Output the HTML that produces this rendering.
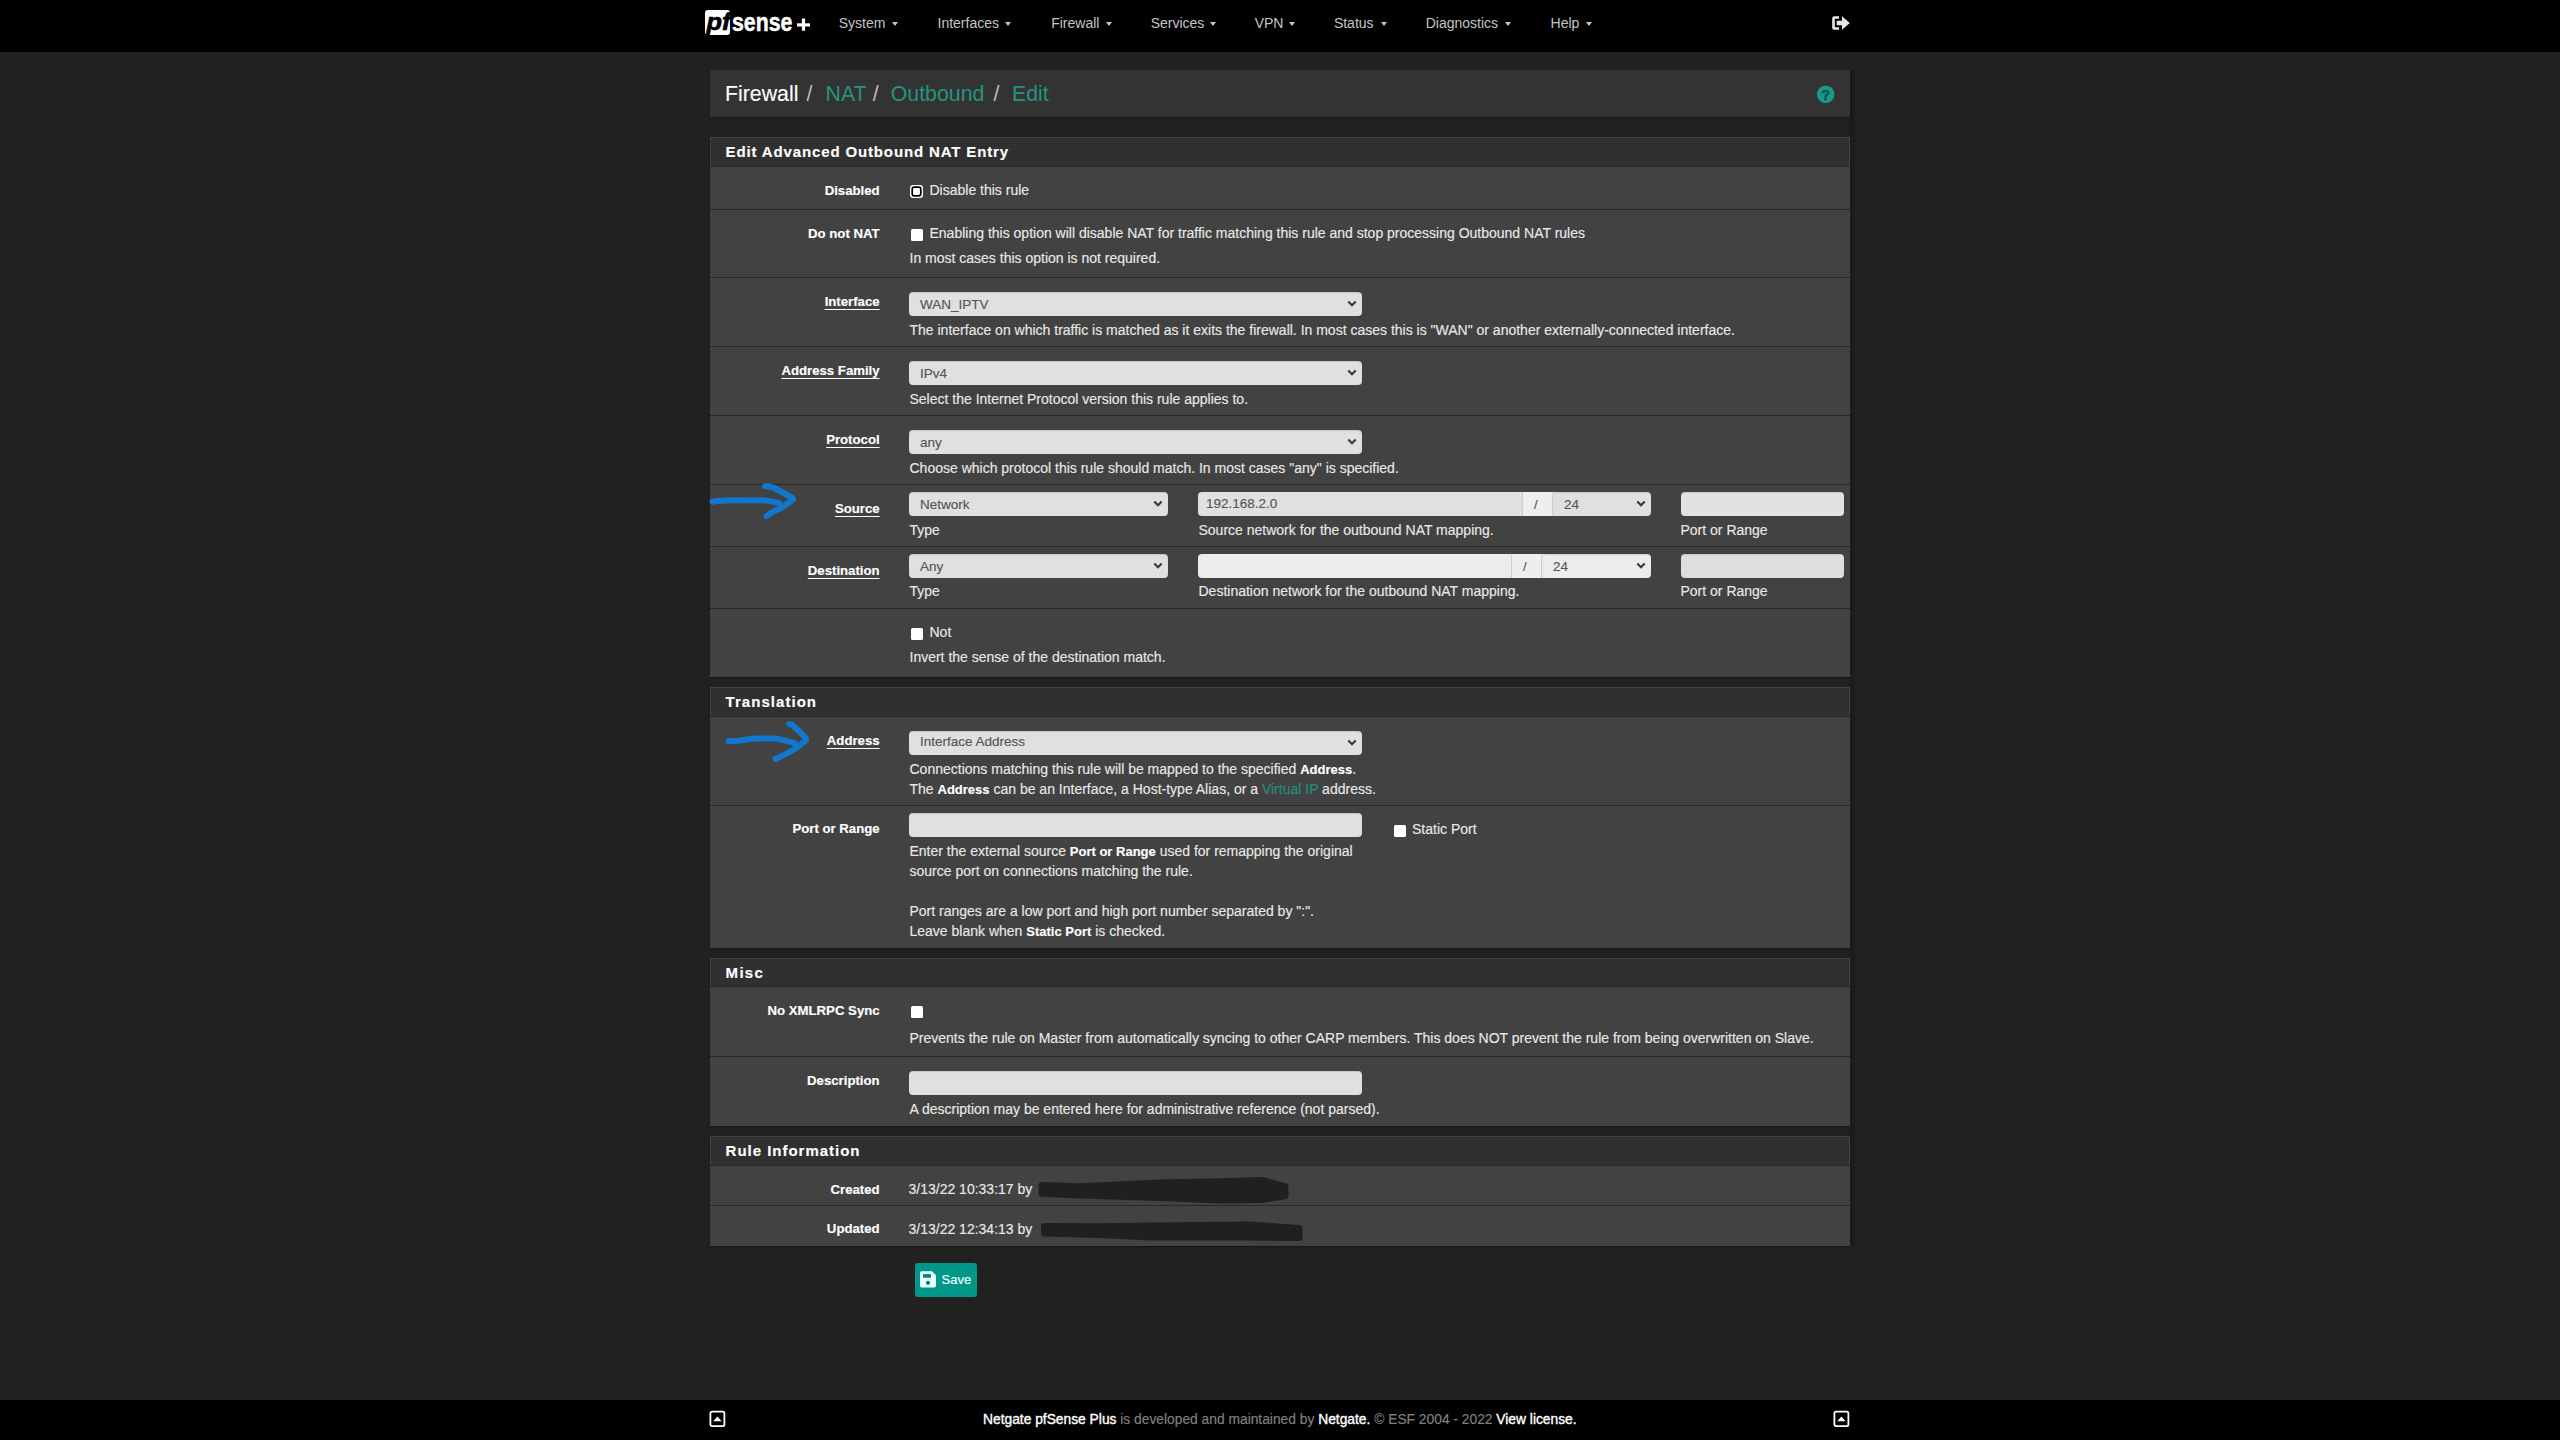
<!DOCTYPE html>
<html><head><meta charset="utf-8"><title>Firewall: NAT: Outbound: Edit</title>
<style>
html,body{margin:0;padding:0;}
body{width:2560px;height:1440px;position:relative;overflow:hidden;background:#212121;font-family:"Liberation Sans",sans-serif;}
.t{position:absolute;white-space:nowrap;-webkit-text-stroke:0.15px currentColor;}
.t b{font-weight:700;color:#fff;font-size:13px;}
.r{position:absolute;}
</style></head><body>
<div class="r" style="left:0px;top:0px;width:2560px;height:52px;background:#000;"></div>
<div class="r" style="left:0px;top:1400px;width:2560px;height:40px;background:#000;"></div>
<svg class="r" style="left:704px;top:9px" width="110" height="28" viewBox="0 0 110 28"><rect x="1" y="1" width="25" height="25" rx="3" fill="#fff"/><text x="2.5" y="21.3" font-family="Liberation Sans" font-weight="bold" font-style="italic" font-size="24.5" fill="#000" stroke="#000" stroke-width="0.7" textLength="24" lengthAdjust="spacingAndGlyphs">pf</text><text x="28" y="22" font-family="Liberation Sans" font-weight="bold" font-size="25" fill="#fff" stroke="#fff" stroke-width="0.5" textLength="60.4" lengthAdjust="spacingAndGlyphs">sense</text><rect x="93" y="14.3" width="13" height="3.2" fill="#fff"/><rect x="97.9" y="9.5" width="3.2" height="12.2" fill="#fff"/></svg>
<div class="t" style="left:838.7px;top:16.45px;font-size:14px;line-height:14px;font-weight:400;color:#c4c4c4;-webkit-text-stroke:0;">System</div>
<div class="r" style="left:891.7px;top:22px;width:0;height:0;border-left:3.8px solid transparent;border-right:3.8px solid transparent;border-top:4.4px solid #c4c4c4"></div>
<div class="t" style="left:937.5px;top:16.45px;font-size:14px;line-height:14px;font-weight:400;color:#c4c4c4;-webkit-text-stroke:0;">Interfaces</div>
<div class="r" style="left:1005.0px;top:22px;width:0;height:0;border-left:3.8px solid transparent;border-right:3.8px solid transparent;border-top:4.4px solid #c4c4c4"></div>
<div class="t" style="left:1051.2px;top:16.45px;font-size:14px;line-height:14px;font-weight:400;color:#c4c4c4;-webkit-text-stroke:0;">Firewall</div>
<div class="r" style="left:1105.6px;top:22px;width:0;height:0;border-left:3.8px solid transparent;border-right:3.8px solid transparent;border-top:4.4px solid #c4c4c4"></div>
<div class="t" style="left:1150.7px;top:16.45px;font-size:14px;line-height:14px;font-weight:400;color:#c4c4c4;-webkit-text-stroke:0;">Services</div>
<div class="r" style="left:1209.5px;top:22px;width:0;height:0;border-left:3.8px solid transparent;border-right:3.8px solid transparent;border-top:4.4px solid #c4c4c4"></div>
<div class="t" style="left:1254.7px;top:16.45px;font-size:14px;line-height:14px;font-weight:400;color:#c4c4c4;-webkit-text-stroke:0;">VPN</div>
<div class="r" style="left:1289.0px;top:22px;width:0;height:0;border-left:3.8px solid transparent;border-right:3.8px solid transparent;border-top:4.4px solid #c4c4c4"></div>
<div class="t" style="left:1333.9px;top:16.45px;font-size:14px;line-height:14px;font-weight:400;color:#c4c4c4;-webkit-text-stroke:0;">Status</div>
<div class="r" style="left:1380.7px;top:22px;width:0;height:0;border-left:3.8px solid transparent;border-right:3.8px solid transparent;border-top:4.4px solid #c4c4c4"></div>
<div class="t" style="left:1425.7px;top:16.45px;font-size:14px;line-height:14px;font-weight:400;color:#c4c4c4;-webkit-text-stroke:0;">Diagnostics</div>
<div class="r" style="left:1505.0px;top:22px;width:0;height:0;border-left:3.8px solid transparent;border-right:3.8px solid transparent;border-top:4.4px solid #c4c4c4"></div>
<div class="t" style="left:1550.6000000000001px;top:16.45px;font-size:14px;line-height:14px;font-weight:400;color:#c4c4c4;-webkit-text-stroke:0;">Help</div>
<div class="r" style="left:1585.7px;top:22px;width:0;height:0;border-left:3.8px solid transparent;border-right:3.8px solid transparent;border-top:4.4px solid #c4c4c4"></div>
<svg class="r" style="left:1831px;top:15px" width="20" height="16" viewBox="0 0 20 16"><path d="M8 1.2 H3.2 Q1.2 1.2 1.2 3.2 V12.8 Q1.2 14.8 3.2 14.8 H8 V12.3 H3.8 V3.7 H8 Z" fill="#e8e8e8"/><path d="M5.7 5.7 H11 V1.2 L18.8 8 L11 14.8 V10.3 H5.7 Z" fill="#e8e8e8"/></svg>
<div class="r" style="left:1850px;top:70px;width:5px;height:1176px;background:#1c1c1c;"></div>
<div class="r" style="left:710px;top:70px;width:1140px;height:47px;background:#333333;box-shadow:1px 1px 2px rgba(0,0,0,.35)"></div>
<div class="t" style="left:725px;top:83.97px;font-size:21.3px;line-height:21.3px;font-weight:400;color:#ffffff;-webkit-text-stroke:0.1px #fff;">Firewall</div>
<div class="t" style="left:806.5px;top:83.97px;font-size:21.3px;line-height:21.3px;font-weight:400;color:#bdbdbd;-webkit-text-stroke:0;">/</div>
<div class="t" style="left:825.5px;top:83.97px;font-size:21.3px;line-height:21.3px;font-weight:400;color:#27937f;-webkit-text-stroke:0;">NAT</div>
<div class="t" style="left:872.8px;top:83.97px;font-size:21.3px;line-height:21.3px;font-weight:400;color:#bdbdbd;-webkit-text-stroke:0;">/</div>
<div class="t" style="left:890.8px;top:83.97px;font-size:21.3px;line-height:21.3px;font-weight:400;color:#27937f;-webkit-text-stroke:0;">Outbound</div>
<div class="t" style="left:993.5px;top:83.97px;font-size:21.3px;line-height:21.3px;font-weight:400;color:#bdbdbd;-webkit-text-stroke:0;">/</div>
<div class="t" style="left:1012px;top:83.97px;font-size:21.3px;line-height:21.3px;font-weight:400;color:#27937f;-webkit-text-stroke:0;">Edit</div>
<svg class="r" style="left:1816px;top:85px" width="20" height="19" viewBox="0 0 20 19"><circle cx="9.7" cy="9.2" r="8.8" fill="#179a8a"/><text x="9.8" y="14.6" text-anchor="middle" font-family="Liberation Sans" font-weight="bold" font-size="14.5" fill="#07574d" stroke="#07574d" stroke-width="0.5">?</text></svg>
<div class="r" style="left:710px;top:137px;width:1140px;height:540px;background:#424242;box-shadow:0 1px 1px rgba(0,0,0,.35)"></div>
<div class="r" style="left:711px;top:138px;width:1138px;height:28px;background:#303030;"></div>
<div class="r" style="left:710px;top:166px;width:1140px;height:1px;background:#262626;"></div>
<div class="t" style="left:725.6px;top:143.50px;font-size:15px;line-height:15px;font-weight:700;color:#ffffff;letter-spacing:0.86px;">Edit Advanced Outbound NAT Entry</div>
<div class="r" style="left:710px;top:209px;width:1140px;height:1px;background:#282828;"></div>
<div class="r" style="left:710px;top:277px;width:1140px;height:1px;background:#282828;"></div>
<div class="r" style="left:710px;top:346px;width:1140px;height:1px;background:#282828;"></div>
<div class="r" style="left:710px;top:415px;width:1140px;height:1px;background:#282828;"></div>
<div class="r" style="left:710px;top:484px;width:1140px;height:1px;background:#282828;"></div>
<div class="r" style="left:710px;top:546px;width:1140px;height:1px;background:#282828;"></div>
<div class="r" style="left:710px;top:608px;width:1140px;height:1px;background:#282828;"></div>
<div class="t" style="right:1680.4px;text-align:right;top:183.58px;font-size:13.2px;line-height:13.2px;font-weight:700;color:#ffffff;">Disabled</div>
<svg class="r" style="left:909px;top:184px" width="16" height="16" viewBox="0 0 16 16"><rect x="1" y="1" width="13" height="13" rx="3" fill="#fff"/><rect x="3.2" y="3.2" width="8.6" height="8.6" rx="2" fill="#fff" stroke="#000" stroke-width="1.7"/></svg>
<div class="t" style="left:929.5px;top:182.90px;font-size:14px;line-height:14px;font-weight:400;color:#e8e8e8;">Disable this rule</div>
<div class="t" style="right:1680.4px;text-align:right;top:226.83px;font-size:13.2px;line-height:13.2px;font-weight:700;color:#ffffff;">Do not NAT</div>
<div class="r" style="left:910.5px;top:228.5px;width:12px;height:12px;background:#fff;border-radius:1.5px"></div>
<div class="t" style="left:929.5px;top:226.15px;font-size:14px;line-height:14px;font-weight:400;color:#e8e8e8;">Enabling this option will disable NAT for traffic matching this rule and stop processing Outbound NAT rules</div>
<div class="t" style="left:909.5px;top:250.90px;font-size:14px;line-height:14px;font-weight:400;color:#e8e8e8;">In most cases this option is not required.</div>
<div class="t" style="right:1680.4px;text-align:right;top:294.73px;font-size:13.2px;line-height:13.2px;font-weight:700;color:#ffffff;text-decoration:underline;text-underline-offset:3px;text-decoration-thickness:1.2px;">Interface</div>
<div class="r" style="left:909px;top:292px;width:453px;height:24px;background:#e0e0e0;border-radius:4px;box-shadow:inset 0 1px 1px rgba(0,0,0,.12)"></div>
<div class="t" style="left:920px;top:297.57px;font-size:13.5px;line-height:13.5px;font-weight:400;color:#555;">WAN_IPTV</div>
<svg class="r" style="left:1346.5px;top:300.3px" width="10" height="8" viewBox="0 0 10 8"><path d="M1.3 1.5 L5 5.2 L8.7 1.5" stroke="#3a3a3a" stroke-width="2.2" fill="none"/></svg>
<div class="t" style="left:909.5px;top:322.95px;font-size:14px;line-height:14px;font-weight:400;color:#e8e8e8;">The interface on which traffic is matched as it exits the firewall. In most cases this is &quot;WAN&quot; or another externally-connected interface.</div>
<div class="t" style="right:1680.4px;text-align:right;top:363.73px;font-size:13.2px;line-height:13.2px;font-weight:700;color:#ffffff;text-decoration:underline;text-underline-offset:3px;text-decoration-thickness:1.2px;">Address Family</div>
<div class="r" style="left:909px;top:361px;width:453px;height:24px;background:#e0e0e0;border-radius:4px;box-shadow:inset 0 1px 1px rgba(0,0,0,.12)"></div>
<div class="t" style="left:920px;top:366.57px;font-size:13.5px;line-height:13.5px;font-weight:400;color:#555;">IPv4</div>
<svg class="r" style="left:1346.5px;top:369.3px" width="10" height="8" viewBox="0 0 10 8"><path d="M1.3 1.5 L5 5.2 L8.7 1.5" stroke="#3a3a3a" stroke-width="2.2" fill="none"/></svg>
<div class="t" style="left:909.5px;top:391.95px;font-size:14px;line-height:14px;font-weight:400;color:#e8e8e8;">Select the Internet Protocol version this rule applies to.</div>
<div class="t" style="right:1680.4px;text-align:right;top:432.73px;font-size:13.2px;line-height:13.2px;font-weight:700;color:#ffffff;text-decoration:underline;text-underline-offset:3px;text-decoration-thickness:1.2px;">Protocol</div>
<div class="r" style="left:909px;top:430px;width:453px;height:24px;background:#e0e0e0;border-radius:4px;box-shadow:inset 0 1px 1px rgba(0,0,0,.12)"></div>
<div class="t" style="left:920px;top:435.57px;font-size:13.5px;line-height:13.5px;font-weight:400;color:#555;">any</div>
<svg class="r" style="left:1346.5px;top:438.3px" width="10" height="8" viewBox="0 0 10 8"><path d="M1.3 1.5 L5 5.2 L8.7 1.5" stroke="#3a3a3a" stroke-width="2.2" fill="none"/></svg>
<div class="t" style="left:909.5px;top:460.95px;font-size:14px;line-height:14px;font-weight:400;color:#e8e8e8;">Choose which protocol this rule should match. In most cases &quot;any&quot; is specified.</div>
<div class="t" style="right:1680.4px;text-align:right;top:501.73px;font-size:13.2px;line-height:13.2px;font-weight:700;color:#ffffff;text-decoration:underline;text-underline-offset:3px;text-decoration-thickness:1.2px;">Source</div>
<div class="r" style="left:909px;top:492px;width:259px;height:24px;background:#e0e0e0;border-radius:4px;box-shadow:inset 0 1px 1px rgba(0,0,0,.12)"></div>
<div class="t" style="left:920px;top:497.57px;font-size:13.5px;line-height:13.5px;font-weight:400;color:#555;">Network</div>
<svg class="r" style="left:1152.5px;top:500.3px" width="10" height="8" viewBox="0 0 10 8"><path d="M1.3 1.5 L5 5.2 L8.7 1.5" stroke="#3a3a3a" stroke-width="2.2" fill="none"/></svg>
<div class="t" style="left:909.5px;top:523.15px;font-size:14px;line-height:14px;font-weight:400;color:#e8e8e8;">Type</div>
<div class="r" style="left:1198px;top:492px;width:453px;height:24px;background:#e0e0e0;border-radius:4px;overflow:hidden"><div class="r" style="left:324px;top:0;width:31px;height:24px;background:#eeeeee;border-left:1px solid #cfcfcf;border-right:1px solid #cfcfcf;box-sizing:border-box"></div></div>
<div class="t" style="left:1206px;top:497.37px;font-size:13.5px;line-height:13.5px;font-weight:400;color:#555;">192.168.2.0</div>
<div class="t" style="left:1534px;top:497.80px;font-size:13px;line-height:13px;font-weight:400;color:#555;">/</div>
<div class="r" style="left:1554px;top:492px;width:97px;height:24px;background:transparent;border-radius:4px;box-shadow:inset 0 1px 1px rgba(0,0,0,.12)"></div>
<div class="t" style="left:1564px;top:497.57px;font-size:13.5px;line-height:13.5px;font-weight:400;color:#555;">24</div>
<svg class="r" style="left:1635.5px;top:500.3px" width="10" height="8" viewBox="0 0 10 8"><path d="M1.3 1.5 L5 5.2 L8.7 1.5" stroke="#3a3a3a" stroke-width="2.2" fill="none"/></svg>
<div class="t" style="left:1198.5px;top:523.15px;font-size:14px;line-height:14px;font-weight:400;color:#e8e8e8;">Source network for the outbound NAT mapping.</div>
<div class="r" style="left:1681px;top:492px;width:163px;height:24px;background:#e2e2e2;border-radius:4px;box-shadow:inset 0 1px 1px rgba(0,0,0,.12)"></div>
<div class="t" style="left:1680.5px;top:523.15px;font-size:14px;line-height:14px;font-weight:400;color:#e8e8e8;">Port or Range</div>
<div class="t" style="right:1680.4px;text-align:right;top:563.53px;font-size:13.2px;line-height:13.2px;font-weight:700;color:#ffffff;text-decoration:underline;text-underline-offset:3px;text-decoration-thickness:1.2px;">Destination</div>
<div class="r" style="left:909px;top:554px;width:259px;height:24px;background:#e0e0e0;border-radius:4px;box-shadow:inset 0 1px 1px rgba(0,0,0,.12)"></div>
<div class="t" style="left:920px;top:559.57px;font-size:13.5px;line-height:13.5px;font-weight:400;color:#555;">Any</div>
<svg class="r" style="left:1152.5px;top:562.3px" width="10" height="8" viewBox="0 0 10 8"><path d="M1.3 1.5 L5 5.2 L8.7 1.5" stroke="#3a3a3a" stroke-width="2.2" fill="none"/></svg>
<div class="t" style="left:909.5px;top:584.40px;font-size:14px;line-height:14px;font-weight:400;color:#e8e8e8;">Type</div>
<div class="r" style="left:1198px;top:554px;width:453px;height:24px;background:#ececec;border-radius:4px;overflow:hidden"><div class="r" style="left:313px;top:0;width:31px;height:24px;background:#eeeeee;border-left:1px solid #cfcfcf;border-right:1px solid #cfcfcf;box-sizing:border-box"></div></div>
<div class="t" style="left:1523px;top:559.80px;font-size:13px;line-height:13px;font-weight:400;color:#555;">/</div>
<div class="r" style="left:1542px;top:554px;width:109px;height:24px;background:transparent;border-radius:4px;box-shadow:inset 0 1px 1px rgba(0,0,0,.12)"></div>
<div class="t" style="left:1553px;top:559.57px;font-size:13.5px;line-height:13.5px;font-weight:400;color:#555;">24</div>
<svg class="r" style="left:1635.5px;top:562.3px" width="10" height="8" viewBox="0 0 10 8"><path d="M1.3 1.5 L5 5.2 L8.7 1.5" stroke="#3a3a3a" stroke-width="2.2" fill="none"/></svg>
<div class="t" style="left:1198.5px;top:584.40px;font-size:14px;line-height:14px;font-weight:400;color:#e8e8e8;">Destination network for the outbound NAT mapping.</div>
<div class="r" style="left:1681px;top:554px;width:163px;height:24px;background:#dedede;border-radius:4px;box-shadow:inset 0 1px 1px rgba(0,0,0,.12)"></div>
<div class="t" style="left:1680.5px;top:584.40px;font-size:14px;line-height:14px;font-weight:400;color:#e8e8e8;">Port or Range</div>
<div class="r" style="left:910.5px;top:627.5px;width:12px;height:12px;background:#fff;border-radius:1.5px"></div>
<div class="t" style="left:929.5px;top:625.15px;font-size:14px;line-height:14px;font-weight:400;color:#e8e8e8;">Not</div>
<div class="t" style="left:909.5px;top:650.15px;font-size:14px;line-height:14px;font-weight:400;color:#e8e8e8;">Invert the sense of the destination match.</div>
<div class="r" style="left:710px;top:687px;width:1140px;height:261px;background:#424242;box-shadow:0 1px 1px rgba(0,0,0,.35)"></div>
<div class="r" style="left:711px;top:688px;width:1138px;height:28px;background:#303030;"></div>
<div class="r" style="left:710px;top:716px;width:1140px;height:1px;background:#262626;"></div>
<div class="t" style="left:725.6px;top:693.50px;font-size:15px;line-height:15px;font-weight:700;color:#ffffff;letter-spacing:1.04px;">Translation</div>
<div class="r" style="left:710px;top:805px;width:1140px;height:1px;background:#282828;"></div>
<div class="t" style="right:1680.4px;text-align:right;top:733.83px;font-size:13.2px;line-height:13.2px;font-weight:700;color:#ffffff;text-decoration:underline;text-underline-offset:3px;text-decoration-thickness:1.2px;">Address</div>
<div class="r" style="left:909px;top:731px;width:453px;height:24px;background:#e0e0e0;border-radius:4px;box-shadow:inset 0 1px 1px rgba(0,0,0,.12)"></div>
<div class="t" style="left:920px;top:735.27px;font-size:13.5px;line-height:13.5px;font-weight:400;color:#555;">Interface Address</div>
<svg class="r" style="left:1346.5px;top:739.3px" width="10" height="8" viewBox="0 0 10 8"><path d="M1.3 1.5 L5 5.2 L8.7 1.5" stroke="#3a3a3a" stroke-width="2.2" fill="none"/></svg>
<div class="t" style="left:909.5px;top:762.05px;font-size:14px;line-height:14px;font-weight:400;color:#e8e8e8;">Connections matching this rule will be mapped to the specified <b>Address</b>.</div>
<div class="t" style="left:909.5px;top:781.85px;font-size:14px;line-height:14px;font-weight:400;color:#e8e8e8;">The <b>Address</b> can be an Interface, a Host-type Alias, or a <span style="color:#24907f">Virtual IP</span> address.</div>
<div class="t" style="right:1680.4px;text-align:right;top:822.13px;font-size:13.2px;line-height:13.2px;font-weight:700;color:#ffffff;">Port or Range</div>
<div class="r" style="left:909px;top:813px;width:453px;height:24px;background:#e0e0e0;border-radius:4px;box-shadow:inset 0 1px 1px rgba(0,0,0,.12)"></div>
<div class="r" style="left:1393.5px;top:824.5px;width:12px;height:12px;background:#fff;border-radius:1.5px"></div>
<div class="t" style="left:1412px;top:822.15px;font-size:14px;line-height:14px;font-weight:400;color:#e8e8e8;">Static Port</div>
<div class="t" style="left:909.5px;top:844.25px;font-size:14px;line-height:14px;font-weight:400;color:#e8e8e8;">Enter the external source <b>Port or Range</b> used for remapping the original</div>
<div class="t" style="left:909.5px;top:863.75px;font-size:14px;line-height:14px;font-weight:400;color:#e8e8e8;">source port on connections matching the rule.</div>
<div class="t" style="left:909.5px;top:903.75px;font-size:14px;line-height:14px;font-weight:400;color:#e8e8e8;">Port ranges are a low port and high port number separated by &quot;:&quot;.</div>
<div class="t" style="left:909.5px;top:923.75px;font-size:14px;line-height:14px;font-weight:400;color:#e8e8e8;">Leave blank when <b>Static Port</b> is checked.</div>
<div class="r" style="left:710px;top:958px;width:1140px;height:168px;background:#424242;box-shadow:0 1px 1px rgba(0,0,0,.35)"></div>
<div class="r" style="left:711px;top:959px;width:1138px;height:27px;background:#303030;"></div>
<div class="r" style="left:710px;top:986px;width:1140px;height:1px;background:#262626;"></div>
<div class="t" style="left:725.6px;top:964.50px;font-size:15px;line-height:15px;font-weight:700;color:#ffffff;letter-spacing:1.3px;">Misc</div>
<div class="r" style="left:710px;top:1056px;width:1140px;height:1px;background:#282828;"></div>
<div class="t" style="right:1680.4px;text-align:right;top:1003.83px;font-size:13.2px;line-height:13.2px;font-weight:700;color:#ffffff;">No XMLRPC Sync</div>
<div class="r" style="left:910.5px;top:1005.5px;width:12px;height:12px;background:#fff;border-radius:1.5px"></div>
<div class="t" style="left:909.5px;top:1030.65px;font-size:14px;line-height:14px;font-weight:400;color:#e8e8e8;">Prevents the rule on Master from automatically syncing to other CARP members. This does NOT prevent the rule from being overwritten on Slave.</div>
<div class="t" style="right:1680.4px;text-align:right;top:1073.83px;font-size:13.2px;line-height:13.2px;font-weight:700;color:#ffffff;">Description</div>
<div class="r" style="left:909px;top:1071px;width:453px;height:24px;background:#e0e0e0;border-radius:4px;box-shadow:inset 0 1px 1px rgba(0,0,0,.12)"></div>
<div class="t" style="left:909.5px;top:1101.90px;font-size:14px;line-height:14px;font-weight:400;color:#e8e8e8;">A description may be entered here for administrative reference (not parsed).</div>
<div class="r" style="left:710px;top:1136px;width:1140px;height:110px;background:#424242;box-shadow:0 1px 1px rgba(0,0,0,.35)"></div>
<div class="r" style="left:711px;top:1137px;width:1138px;height:28px;background:#303030;"></div>
<div class="r" style="left:710px;top:1165px;width:1140px;height:1px;background:#262626;"></div>
<div class="t" style="left:725.6px;top:1142.50px;font-size:15px;line-height:15px;font-weight:700;color:#ffffff;letter-spacing:0.98px;">Rule Information</div>
<div class="r" style="left:710px;top:1205px;width:1140px;height:1px;background:#282828;"></div>
<div class="t" style="right:1680.4px;text-align:right;top:1182.73px;font-size:13.2px;line-height:13.2px;font-weight:700;color:#ffffff;">Created</div>
<div class="t" style="left:908.5px;top:1182.05px;font-size:14px;line-height:14px;font-weight:400;color:#e8e8e8;">3/13/22 10:33:17 by</div>
<div class="t" style="right:1680.4px;text-align:right;top:1222.33px;font-size:13.2px;line-height:13.2px;font-weight:700;color:#ffffff;">Updated</div>
<div class="t" style="left:908.5px;top:1221.65px;font-size:14px;line-height:14px;font-weight:400;color:#e8e8e8;">3/13/22 12:34:13 by</div>
<svg class="r" style="left:0;top:0" width="2560" height="1440" viewBox="0 0 2560 1440"><path d="M1042 1185.5 L1080 1186.75 L1160 1183 L1220 1181.75 L1262 1180.5 L1285 1186.75 L1285 1195.75 L1262 1199.5 L1220 1200 L1160 1197.6 L1080 1195 L1042 1193.25 Z" fill="#202020" stroke="#202020" stroke-width="7" stroke-linejoin="round"/><path d="M1044.5 1226.5 L1100 1226.75 L1150 1226 L1250 1225 L1299 1228.5 L1299 1237.5 L1250 1237 L1150 1237 L1100 1234.5 L1044.5 1233 Z" fill="#202020" stroke="#202020" stroke-width="7" stroke-linejoin="round"/></svg>
<div class="r" style="left:915px;top:1263px;width:62px;height:34px;background:#009688;border-radius:3px"></div>
<svg class="r" style="left:919px;top:1270px" width="18" height="18" viewBox="0 0 18 18"><path d="M2.5 1.2 H13 L17 5.2 V15.8 Q17 17.4 15.4 17.4 H2.5 Q1 17.4 1 15.8 V2.8 Q1 1.2 2.5 1.2 Z" fill="#e6ffff"/><rect x="4" y="4.2" width="8" height="3.5" fill="#0b7c70"/><circle cx="9" cy="12.8" r="2.1" fill="#0b7c70"/></svg>
<div class="t" style="left:941.5px;top:1272.90px;font-size:13px;line-height:13px;font-weight:400;color:#e8ffff;-webkit-text-stroke:0.2px #e8ffff;">Save</div>
<svg class="r" style="left:709px;top:1410px" width="17" height="18" viewBox="0 0 17 18"><rect x="1.4" y="1.6" width="14" height="14.6" rx="1.6" fill="none" stroke="#fff" stroke-width="1.8"/><path d="M4.2 11.2 L8.4 6.4 L12.6 11.2 Z" fill="#fff"/></svg>
<svg class="r" style="left:1833px;top:1410px" width="17" height="18" viewBox="0 0 17 18"><rect x="1.4" y="1.6" width="14" height="14.6" rx="1.6" fill="none" stroke="#fff" stroke-width="1.8"/><path d="M4.2 11.2 L8.4 6.4 L12.6 11.2 Z" fill="#fff"/></svg>
<div class="t" style="left:983px;top:1413.32px;font-size:13.8px;line-height:13.8px;font-weight:400;color:#808080;"><span style="color:#fff;-webkit-text-stroke:0.35px #fff">Netgate pfSense Plus</span> is developed and maintained by <span style="color:#fff;-webkit-text-stroke:0.35px #fff">Netgate.</span> &copy; ESF 2004 - 2022 <span style="color:#fff;-webkit-text-stroke:0.35px #fff">View license.</span></div>
<svg class="r" style="left:0;top:0;pointer-events:none" width="2560" height="1440" viewBox="0 0 2560 1440"><g fill="none" stroke="#1177d0" stroke-width="6" stroke-linecap="round" stroke-linejoin="round"><path d="M712.5 501.7 C720 500.5 730 500.3 745 500.3 L763.6 500.3 C770 501 775 502 779 503"/><path d="M765 486.3 C768 486.3 770 486.5 773 487.5 C780 491 786 494.5 792 497.5 L793 499.4 C789 502.5 785 506 779 509 C774 511 770 512.5 766.4 516.3"/><path d="M728.6 741.3 C732 741.2 736 741 740 740.5 C746 739.5 750 738.6 756 738.4 L776 738.4 C783 740 789 742 794.7 743.1"/><path d="M789.5 723.9 C791 724 792.5 724.8 793.8 726.3 C798 730.5 802 734 805 737 C806 738 806 739.5 805.5 740.5 C802 744 798 747 793 750 C788 753 782 756 775.5 759"/></g></svg>
</body></html>
